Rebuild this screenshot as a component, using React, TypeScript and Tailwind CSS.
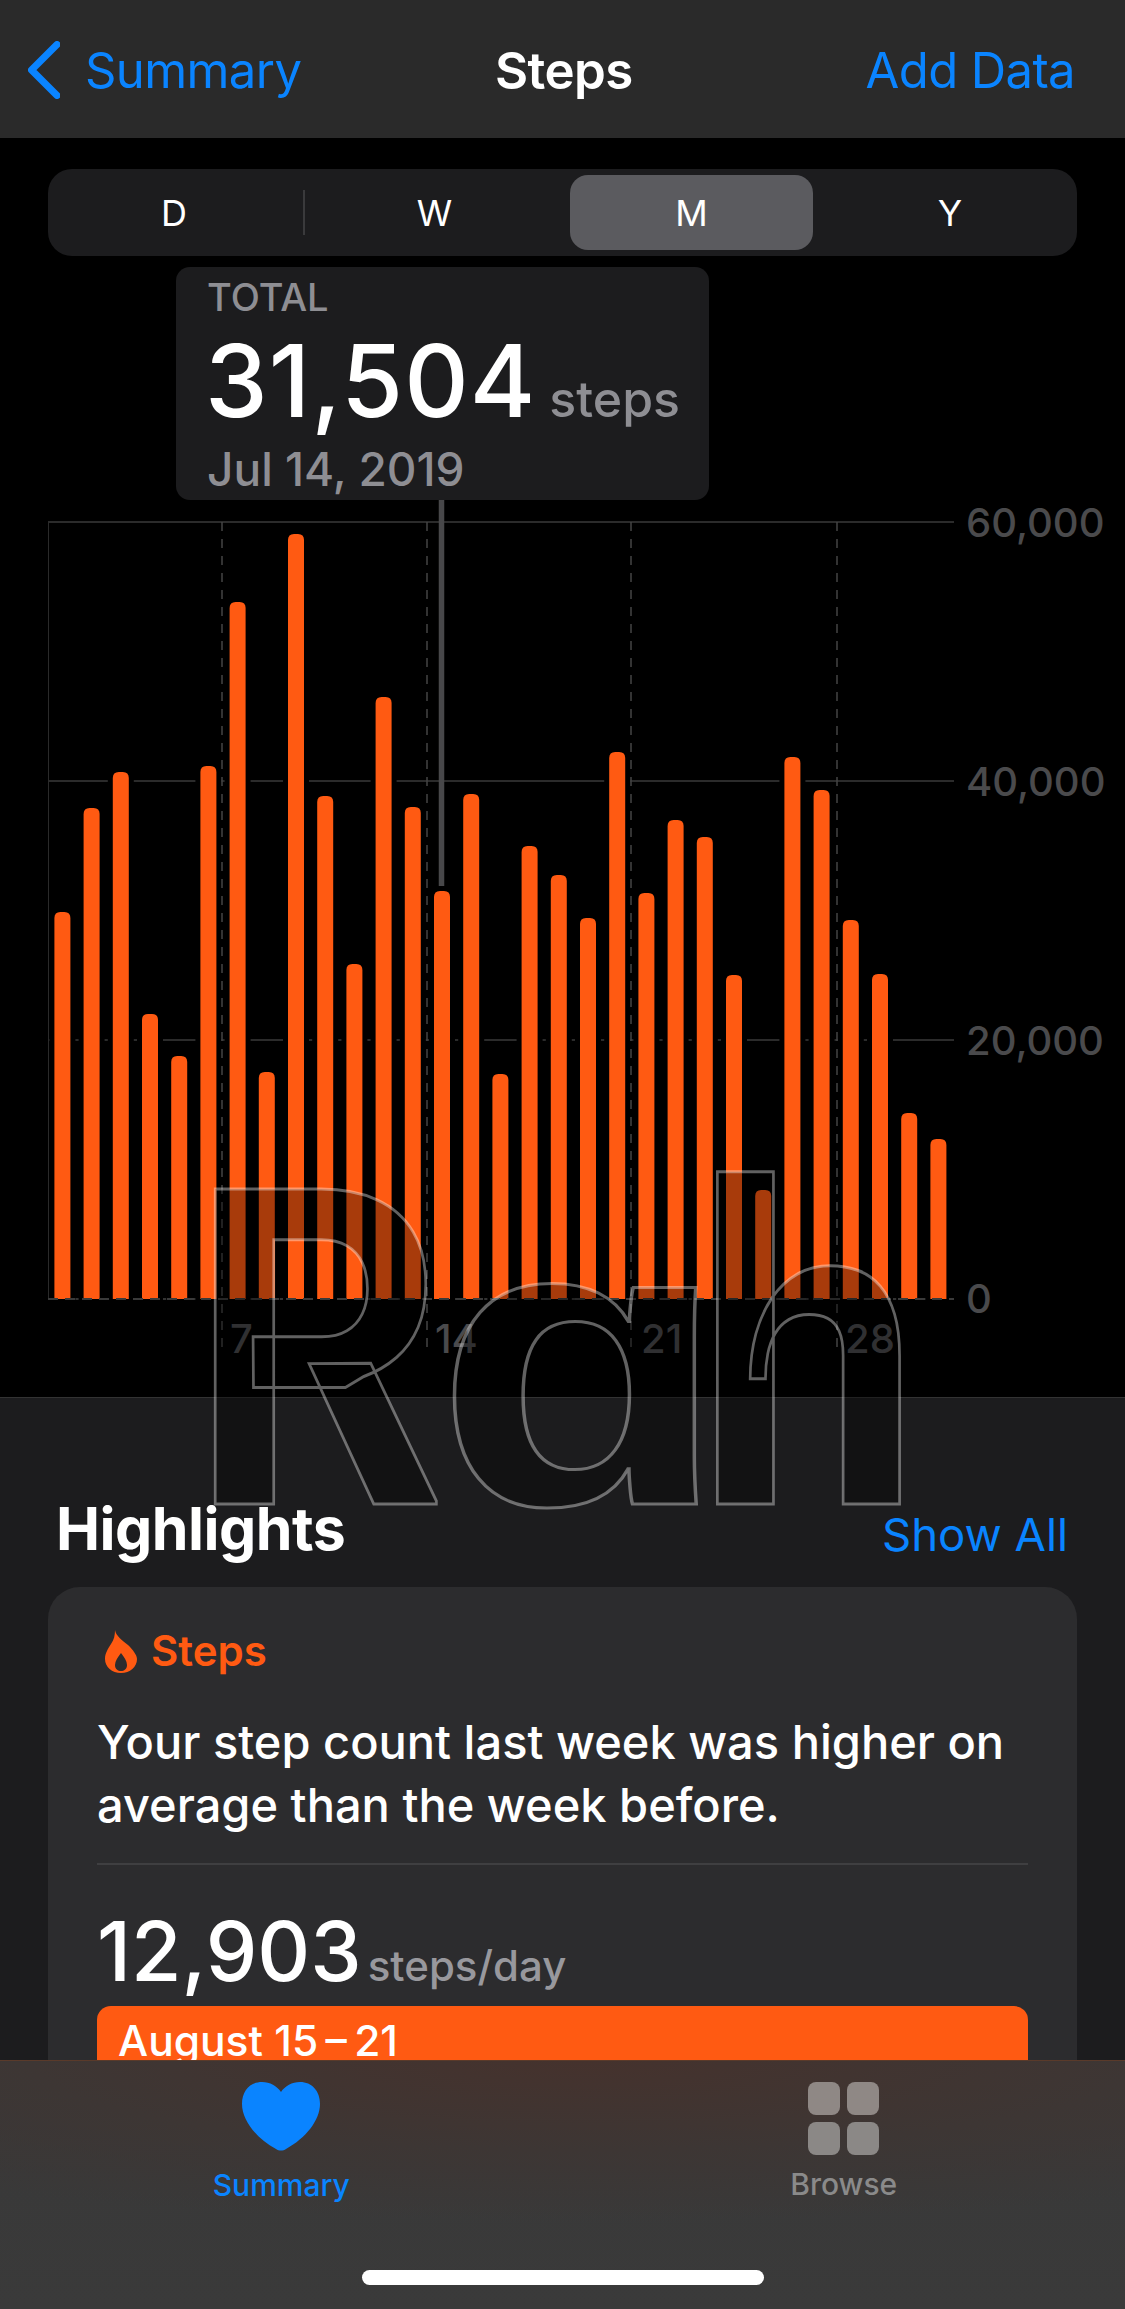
import React from "react";

const tops = [912,808,772,1014,1056,766,602,1072,534,796,964,697,807,891,794,1074,846,875,918,752,893,820,837,975,1190,757,790,920,974,1113,1139];
const Y0 = 500;
const BASE = 1299 - Y0;
const barPath = (i: number, top: number) => {
  const x = 54.4 + i * 29.2;
  const t = top - Y0;
  return `M${x} ${BASE}V${t + 6}Q${x} ${t} ${x + 6} ${t}H${x + 10}Q${x + 16} ${t} ${x + 16} ${t + 6}V${BASE}Z`;
};

function Chart() {
  const grid = [522, 781, 1040];
  const labels: [string, number][] = [["60,000", 523], ["40,000", 782], ["20,000", 1041], ["0", 1299]];
  const days: [string, number, number][] = [["7", 222, 230], ["14", 427, 435], ["21", 631, 641], ["28", 837, 845]];
  return (
    <svg width="1125" height="897" viewBox="0 0 1125 897" className="block" style={{ fontFamily: "Inter, sans-serif" }}>
      <line x1="48.5" x2="48.5" y1="22" y2={BASE} stroke="#2a2a2a" strokeWidth="1" />
      {grid.map((y) => (
        <line key={y} x1="48" x2="954" y1={y - Y0} y2={y - Y0} stroke="#2b2b2b" strokeWidth="2" />
      ))}
      <line x1="954" x2="48" y1={BASE} y2={BASE} stroke="#333" strokeWidth="2" />
      {tops.map((t, i) => (
        <path key={i} d={barPath(i, t)} fill="#000" stroke="#000" strokeWidth="10" />
      ))}
      {days.map(([, x]) => (
        <line key={x} x1={x} x2={x} y1="22" y2="855" stroke="#444" strokeWidth="1.5" strokeDasharray="9 8" />
      ))}
      <line x1="441.5" x2="441.5" y1="0" y2="386" stroke="#48484a" strokeWidth="5.5" />
      {tops.map((t, i) => (
        <path key={i} d={barPath(i, t)} fill="#ff5a12" />
      ))}
      <line x1="48" x2="954" y1={BASE} y2={BASE} stroke="#3a3a3a" strokeWidth="2" strokeDasharray="10 7" />
      {labels.map(([s, y]) => (
        <text key={s} x="966" y={y - Y0 + 14} fontSize="40" fontWeight="500" fill="#4a4a4c">{s}</text>
      ))}
      {days.map(([s, , tx]) => (
        <text key={s} x={tx} y="853" fontSize="40" fontWeight="500" fill="#4a4a4c">{s}</text>
      ))}
    </svg>
  );
}

export default function App() {
  return (
    <div className="relative flex h-[2309px] w-[1125px] flex-col overflow-hidden bg-black font-['Inter',sans-serif] text-white">
      <header className="flex h-[138px] shrink-0 items-center justify-between bg-[#2a2a2a] pl-[28px] pr-[50px] pt-[4px] text-[49px] tracking-[-0.6px]">
        <div className="flex items-center gap-[25px] text-[#0a84ff]">
          <svg width="32" height="58" viewBox="0 0 32 58" fill="none" className="-mt-[2px]">
            <path d="M29 3.5 3.5 29 29 54.5" stroke="#0a84ff" strokeWidth="7" strokeLinecap="round" strokeLinejoin="round" />
          </svg>
          <span>Summary</span>
        </div>
        <span className="absolute left-[495px] text-[51px] font-semibold">Steps</span>
        <span className="text-[#0a84ff]">Add Data</span>
      </header>

      <main className="h-[1259px] shrink-0 bg-black">
        <div className="mx-[48px] mt-[31px] flex h-[87px] items-center rounded-[24px] bg-[#1c1c1e] text-[36px]">
          <div className="flex h-full w-[252px] items-center justify-center">D</div>
          <div className="mx-[3px] h-[45px] w-[2px] bg-[#3a3a3c]" />
          <div className="mr-[7px] flex h-full w-[255px] items-center justify-center pr-[2px]">W</div>
          <div className="flex h-[75px] w-[243px] items-center justify-center rounded-[18px] bg-[#5b5b5f]">M</div>
          <div className="flex h-full flex-1 items-center justify-center pl-[10px]">Y</div>
        </div>

        <div className="ml-[176px] mt-[11px] h-[233px] w-[533px] rounded-[14px] bg-[#1c1c1e] pl-[31px] pt-[10px]">
          <div className="text-[38px] font-medium leading-[40px] text-[#8e8e93]">TOTAL</div>
          <div className="-ml-[2px] mt-[14px] flex items-baseline gap-[13px] leading-[100px]">
            <span className="text-[100px] font-medium tracking-[1px]">31,504</span>
            <span className="text-[50px] font-medium text-[#8e8e93]">steps</span>
          </div>
          <div className="mt-[-5px] text-[46px] font-medium leading-[50px] text-[#8e8e93]">Jul 14, 2019</div>
        </div>

        <Chart />
      </main>

      <section className="min-h-0 flex-1 overflow-hidden border-t border-[#333] bg-[#1c1c1e]">
        <div className="flex h-[189px] items-end justify-between pb-[26px] pl-[56px] pr-[57px]">
          <span className="text-[59px] font-bold leading-[64px] tracking-[-0.5px]">Highlights</span>
          <span className="mb-[-2px] text-[45.5px] leading-[56px] text-[#0a84ff]">Show All</span>
        </div>
        <div className="mx-[48px] h-[600px] rounded-[32px] bg-[#2c2c2e] px-[49px] pt-[40px]">
          <div className="flex items-center gap-[14px] text-[#ff5a12]">
            <svg width="32" height="43" viewBox="0 0 32 43" className="ml-[8px]">
              <path fillRule="evenodd" fill="#ff5a12" d="M10 0C11 6 17 10 23 15C28 20 32 25 32 29C32 37 25 43 16 43C7 43 0 37 0 29C0 23 3 19 6 14C9 10 10 5 10 0ZM16 23C13 27 10 31 10 35C10 39 13 41 16 41C19 41 22 39 22 35C22 31 19 27 16 23Z" />
            </svg>
            <span className="text-[42px] font-semibold leading-[48px]">Steps</span>
          </div>
          <p className="mt-[35px] text-[47px] font-medium leading-[63px]">
            Your step count last week was higher on
            <br />
            average than the week before.
          </p>
          <div className="mt-[27px] h-[2px] bg-[#3f3f41]" />
          <div className="mt-[37px] flex items-baseline gap-[6px] leading-[100px]">
            <span className="text-[82px] font-medium">12,903</span>
            <span className="text-[42px] font-medium text-[#98989d]">steps/day</span>
          </div>
          <div className="mt-[-10px] h-[120px] rounded-[14px] bg-[#ff5a12] pl-[21px] pt-[10px] text-[42.5px] font-medium leading-[50px]">
            {"August 15\u2009–\u200921"}
          </div>
        </div>
      </section>

      <nav className="relative grid h-[249px] shrink-0 grid-cols-2 border-t border-[#5a3a2a] bg-[radial-gradient(ellipse_90%_65%_at_52%_0%,#45322d_0%,#3d3634_55%,transparent_100%),linear-gradient(180deg,#383838_0%,#3a3a3a_100%)] pt-[21px]">
        <div className="flex flex-col items-center">
          <svg width="78" height="70" viewBox="0 0 78 70" className="block">
            <path fill="#0a84ff" d="M39 10C35 4 28 0 20 0C8 0 0 9 0 22C0 38 14 56 34 67C37 69 41 69 44 67C64 56 78 38 78 22C78 9 70 0 58 0C50 0 43 4 39 10Z" />
          </svg>
          <span className="mt-[15px] text-[30px] font-medium leading-[36px] text-[#0a84ff]">Summary</span>
        </div>
        <div className="flex flex-col items-center">
          <div className="grid grid-cols-[32px_32px] grid-rows-[33px_33px] gap-[7px]">
            <div className="rounded-[8px] bg-[#8f8885]" />
            <div className="rounded-[8px] bg-[#8f8885]" />
            <div className="rounded-[8px] bg-[#8b8886]" />
            <div className="rounded-[8px] bg-[#8b8886]" />
          </div>
          <span className="mt-[11px] text-[30px] font-medium leading-[36px] text-[#8a8a8a]">Browse</span>
        </div>
        <div className="absolute bottom-[24px] left-[362px] h-[15px] w-[402px] rounded-full bg-white" />
      </nav>

      <span className="pointer-events-none absolute left-[190px] top-[1103px] origin-left scale-x-[0.9] font-['Roboto',sans-serif] text-[443px] font-bold leading-[500px] text-[rgba(0,0,0,0.34)] [-webkit-text-stroke:3px_rgba(255,255,255,0.38)]">
        R<span className="ml-[-12px] inline-block origin-left scale-x-[1.3] text-[410px]">ɑ</span><span className="ml-[41px]">h</span>
      </span>
    </div>
  );
}
